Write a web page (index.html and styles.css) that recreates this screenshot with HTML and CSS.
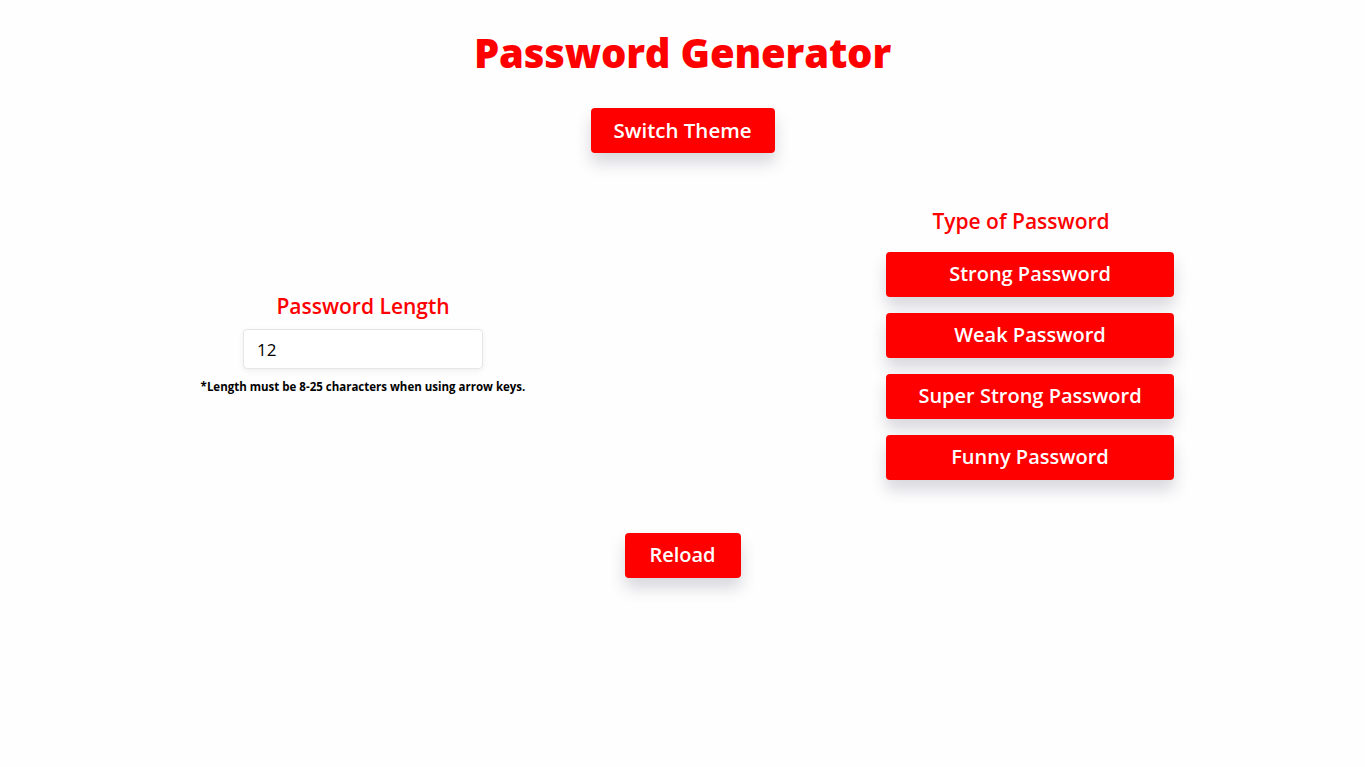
FILE: index.html
```html
<!DOCTYPE html>
<html lang="en">
<head>
<meta charset="utf-8">
<title>Password Generator</title>
<link rel="stylesheet" href="styles.css">
</head>
<body>
<main class="page">
  <h1 class="title">Password Generator</h1>
  <button class="btn btn-switch">Switch Theme</button>
  <section class="columns">
    <div class="length-col">
      <h2 class="sub">Password Length</h2>
      <input class="length-input" type="text" value="12">
      <p class="hint">*Length must be 8-25 characters when using arrow keys.</p>
    </div>
    <div class="type-col">
      <h2 class="sub sub-type">Type of Password</h2>
      <button class="btn btn-type">Strong Password</button>
      <button class="btn btn-type">Weak Password</button>
      <button class="btn btn-type">Super Strong Password</button>
      <button class="btn btn-type">Funny Password</button>
    </div>
  </section>
  <button class="btn btn-reload">Reload</button>
</main>
</body>
</html>
```
FILE: styles.css
```css
* { box-sizing: border-box; }
html, body { margin: 0; padding: 0; background: #fefefe; }
body { font-family: "Open Sans", "Noto Sans", sans-serif; color: #000; }

.page {
  display: flex;
  flex-direction: column;
  align-items: center;
  padding: 28px 0 60px;
}

.title {
  margin: 0;
  font-size: 40px;
  line-height: 50px;
  font-weight: 800;
  color: #ff0000;
  letter-spacing: -0.2px;
}

.btn {
  font-family: inherit;
  background: #ff0000;
  color: #fff;
  border: none;
  border-radius: 4px;
  font-size: 20px;
  font-weight: 600;
  height: 45px;
  padding: 0 0 2px;
  box-shadow: 0 10px 16px rgba(60, 60, 90, 0.2);
  cursor: pointer;
}

.btn-switch {
  margin-top: 30px;
  width: 184px;
  font-size: 20.5px;
}

.columns {
  width: 100%;
  display: flex;
  justify-content: space-between;
  align-items: center;
  padding: 0 191px 0 193px;
  margin-top: 55px;
}

.length-col {
  width: 340px;
  display: flex;
  flex-direction: column;
  align-items: center;
}

.sub {
  margin: 0;
  font-size: 21px;
  line-height: 26px;
  font-weight: 600;
  color: #ff0000;
}

.length-input {
  margin-top: 10px;
  width: 240px;
  height: 40px;
  border: 1px solid #e6e6e6;
  border-radius: 4px;
  padding: 0 13px;
  font-family: inherit;
  font-size: 17px;
  font-weight: 500;
  color: #000;
  background: #fff;
  box-shadow: 0 2px 6px rgba(0, 0, 0, 0.06);
  outline: none;
}

.hint {
  margin: 10px 0 0;
  font-size: 11.5px;
  font-weight: 700;
  line-height: 16px;
}

.type-col {
  width: 288px;
  display: flex;
  flex-direction: column;
  gap: 16px;
}

.sub-type {
  text-align: center;
  padding-right: 18px;
  margin-bottom: 2px;
}

.btn-type {
  width: 288px;
}

.btn-reload {
  margin-top: 53px;
  width: 116px;
}
```
